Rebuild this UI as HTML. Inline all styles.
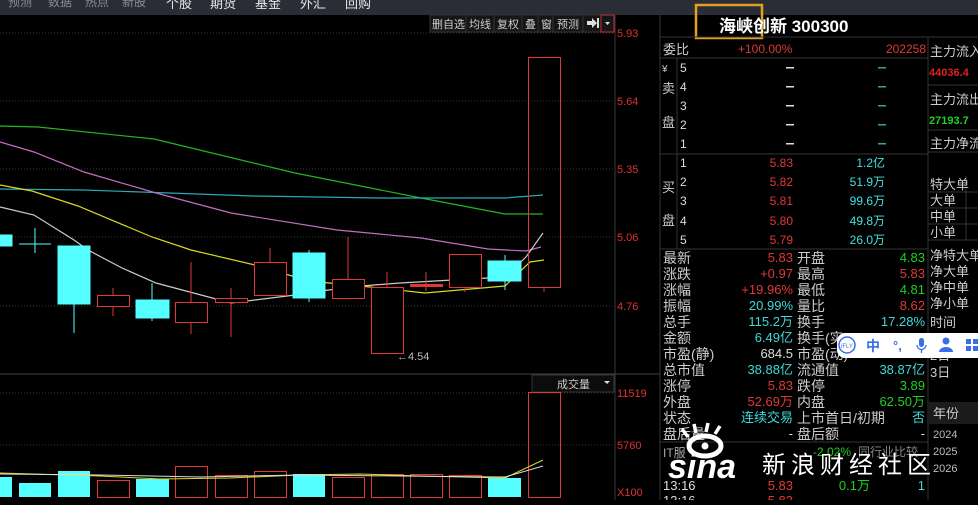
<!DOCTYPE html>
<html><head><meta charset="utf-8"><style>
html,body{margin:0;padding:0;background:#000;}
body{width:978px;height:500px;overflow:hidden;}
svg text{font-family:"Liberation Sans","WenQuanYi Zen Hei","Noto Sans CJK SC",sans-serif;}
</style></head><body>
<svg width="978" height="500" viewBox="0 0 978 500" xmlns="http://www.w3.org/2000/svg">
<rect width="978" height="500" fill="#000"/>
<!-- top bar -->
<rect x="0" y="0" width="978" height="15" fill="#2a2d36"/>
<g font-size="12" fill="#8a8d96">
<text x="8" y="6">预测</text><text x="48" y="6">数据</text><text x="85" y="6">热点</text><text x="122" y="6">新股</text>
</g>
<g font-size="13" fill="#e8e8e8">
<text x="166" y="8">个股</text><text x="210" y="8">期货</text><text x="255" y="8">基金</text><text x="300" y="8">外汇</text><text x="345" y="8">回购</text>
</g>
<!-- grid lines -->
<g stroke="#3a3a3a" stroke-dasharray="1,2">
<line x1="0" y1="33" x2="614" y2="33"/><line x1="0" y1="101" x2="614" y2="101"/><line x1="0" y1="169" x2="614" y2="169"/><line x1="0" y1="237" x2="614" y2="237"/><line x1="0" y1="306" x2="614" y2="306"/>
<line x1="0" y1="393" x2="614" y2="393"/><line x1="0" y1="445" x2="614" y2="445"/>
</g>
<line x1="615" y1="15" x2="615" y2="500" stroke="#333a4a"/>
<line x1="0" y1="374" x2="660" y2="374" stroke="#444"/>
<line x1="660" y1="15" x2="660" y2="500" stroke="#333"/>
<!-- price labels -->
<g font-size="11" fill="#e03030">
<text x="617" y="37">5.93</text><text x="617" y="105">5.64</text><text x="617" y="173">5.35</text><text x="617" y="241">5.06</text><text x="617" y="310">4.76</text>
<text x="617" y="397">11519</text><text x="617" y="449">5760</text><text x="617" y="496">X100</text>
</g>
<!-- toolbar -->
<rect x="430" y="15" width="184" height="17" fill="#161616" stroke="#333"/>
<g font-size="11" fill="#ccc">
<text x="432" y="28">删自选</text><text x="469" y="28">均线</text><text x="497" y="28">复权</text><text x="525" y="28">叠</text><text x="541" y="28">窗</text><text x="557" y="28">预测</text>
</g>
<g stroke="#333"><line x1="466" y1="15" x2="466" y2="32"/><line x1="494" y1="15" x2="494" y2="32"/><line x1="522" y1="15" x2="522" y2="32"/><line x1="538" y1="15" x2="538" y2="32"/><line x1="553" y1="15" x2="553" y2="32"/><line x1="583" y1="15" x2="583" y2="32"/><line x1="601" y1="15" x2="601" y2="32"/></g>
<path d="M587 21h5v-3l5 5-5 5v-3h-5z" fill="#ddd"/><rect x="597" y="18" width="2" height="10" fill="#ddd"/>
<rect x="601" y="15" width="13" height="17" fill="none" stroke="#c03030"/>
<path d="M605 22h5l-2.5 3z" fill="#ddd"/>
<!-- MAs -->
<g fill="none" stroke-width="1.2">
<polyline stroke="#22b822" points="0,126 38,127 154,139 295,173 421,198 505,214 543,214"/>
<polyline stroke="#2aa8b8" points="0,189 84,190 253,196 379,198 505,198 543,195"/>
<polyline stroke="#c070c0" points="0,142 34,152 84,172 156,193 231,213 337,230 421,238 488,249 526,251 541,247"/>
<polyline stroke="#d8d820" points="0,185 32,191 78,206 152,237 191,250 255,265 309,281 370,287 425,293 505,286 530,262 544,260"/>
<polyline stroke="#cccccc" points="0,207 34,215 74,240 88,250 122,268 156,283 231,303 295,295 349,287 400,283 505,277 526,257 543,233"/>
</g>
<!-- candles -->
<g stroke="#e03838" fill="none">
<line x1="113" y1="288" x2="113" y2="316"/><rect x="97.5" y="295.5" width="32" height="11" fill="#000"/>
<line x1="191" y1="262" x2="191" y2="334"/><rect x="175.5" y="302.5" width="32" height="20" fill="#000"/>
<line x1="231" y1="288" x2="231" y2="337"/><rect x="215.5" y="298.5" width="32" height="4" fill="#000"/>
<line x1="270" y1="248" x2="270" y2="262"/><rect x="254.5" y="262.5" width="32" height="33" fill="#000"/>
<line x1="348" y1="237" x2="348" y2="279"/><rect x="332.5" y="279.5" width="32" height="19" fill="#000"/>
<line x1="387" y1="272" x2="387" y2="287"/><rect x="371.5" y="287.5" width="32" height="66" fill="#000"/>
<line x1="426" y1="272" x2="426" y2="291"/><rect x="410.5" y="284.5" width="32" height="2" fill="#e03838"/>
<line x1="465" y1="287" x2="465" y2="292"/><rect x="449.5" y="254.5" width="32" height="33" fill="#000"/>
<line x1="544" y1="287" x2="544" y2="292"/><rect x="528.5" y="57.5" width="32" height="230" fill="none"/>
</g>
<g fill="#55ffff" stroke="#55ffff">
<rect x="0" y="235" width="12" height="11"/>
<line x1="35" y1="228" x2="35" y2="253"/><line x1="19" y1="244" x2="51" y2="244"/>
<line x1="74" y1="300" x2="74" y2="333"/><rect x="58" y="246" width="32" height="58"/>
<line x1="152" y1="283" x2="152" y2="321"/><rect x="136" y="300" width="33" height="18"/>
<line x1="309" y1="250" x2="309" y2="302"/><rect x="293" y="253" width="32" height="45"/>
<line x1="505" y1="255" x2="505" y2="290"/><rect x="488" y="261" width="33" height="20"/>
</g>
<text x="397" y="360" font-size="11" fill="#bbb">←4.54</text>
<!-- volume -->
<rect x="532" y="375" width="82" height="17" fill="#0c0c0c" stroke="#333"/>
<text x="557" y="388" font-size="11" fill="#ccc">成交量</text>
<path d="M604 381h6l-3 3z" fill="#ddd"/>
<g fill="#55ffff">
<rect x="0" y="477" width="12" height="20"/><rect x="19" y="483" width="32" height="14"/><rect x="58" y="471" width="32" height="26"/><rect x="136" y="479" width="33" height="18"/><rect x="293" y="474" width="32" height="23"/><rect x="488" y="478" width="33" height="19"/>
</g>
<g fill="none" stroke="#e03838">
<rect x="97.5" y="480.5" width="32" height="17"/><rect x="175.5" y="466.5" width="32" height="31"/><rect x="215.5" y="475.5" width="32" height="22"/><rect x="254.5" y="471.5" width="32" height="26"/><rect x="332.5" y="477.5" width="32" height="20"/><rect x="371.5" y="474.5" width="32" height="23"/><rect x="410.5" y="474.5" width="32" height="23"/><rect x="449.5" y="475.5" width="32" height="22"/><rect x="528.5" y="392.5" width="32" height="105"/>
</g>
<polyline fill="none" stroke="#d8d820" points="0,473 100,476 160,479 230,478 300,475 360,474 420,476 505,478 543,460"/>
<polyline fill="none" stroke="#ddd" points="0,474 100,475 200,477 300,475 400,476 505,477 543,466"/>
<!-- right panel -->
<rect x="696" y="5" width="66" height="33" fill="none" stroke="#e0a020" stroke-width="2.5"/>
<text x="719" y="32" font-size="17" font-weight="bold" fill="#fff" font-family="Liberation Serif,Noto Serif CJK SC,serif">海峡创新 300300</text>
<g stroke="#333">
<line x1="660" y1="37" x2="978" y2="37"/><line x1="660" y1="58" x2="928" y2="58"/><line x1="660" y1="154" x2="928" y2="154"/><line x1="660" y1="249" x2="928" y2="249"/>
<line x1="677" y1="58" x2="677" y2="249"/><line x1="928" y1="37" x2="928" y2="500"/><line x1="660" y1="442" x2="928" y2="442"/>
<line x1="928" y1="85" x2="978" y2="85"/><line x1="928" y1="130" x2="978" y2="130"/><line x1="928" y1="152" x2="978" y2="152"/>
<line x1="928" y1="192" x2="978" y2="192"/><line x1="928" y1="208" x2="978" y2="208"/><line x1="928" y1="224" x2="978" y2="224"/><line x1="928" y1="240" x2="978" y2="240"/>
<line x1="966" y1="176" x2="966" y2="240"/>
</g>
<g font-size="13" fill="#ccc">
<text x="663" y="54">委比</text>
<text x="662" y="72" font-size="10">¥</text><text x="662" y="93">卖</text><text x="662" y="127">盘</text>
<text x="662" y="192">买</text><text x="662" y="225">盘</text>
</g>
<text x="738" y="53" font-size="12" fill="#e03838">+100.00%</text>
<text x="926" y="53" font-size="12" fill="#e03838" text-anchor="end">202258</text>
<g font-size="12" fill="#ddd">
<text x="680" y="72">5</text><text x="680" y="91">4</text><text x="680" y="110">3</text><text x="680" y="129">2</text><text x="680" y="148">1</text>
<text x="680" y="167">1</text><text x="680" y="186">2</text><text x="680" y="205">3</text><text x="680" y="225">4</text><text x="680" y="244">5</text>
</g>
<g fill="#ddd"><rect x="786" y="67" width="8" height="1.5"/><rect x="786" y="86" width="8" height="1.5"/><rect x="786" y="105" width="8" height="1.5"/><rect x="786" y="124" width="8" height="1.5"/><rect x="786" y="143" width="8" height="1.5"/></g>
<g fill="#2aa8a8"><rect x="878" y="67" width="8" height="1.5"/><rect x="878" y="86" width="8" height="1.5"/><rect x="878" y="105" width="8" height="1.5"/><rect x="878" y="124" width="8" height="1.5"/><rect x="878" y="143" width="8" height="1.5"/></g>
<g font-size="12" fill="#e03838" text-anchor="end">
<text x="793" y="167">5.83</text><text x="793" y="186">5.82</text><text x="793" y="205">5.81</text><text x="793" y="225">5.80</text><text x="793" y="244">5.79</text>
</g>
<g font-size="12" fill="#40e0e0" text-anchor="end">
<text x="885" y="167">1.2亿</text><text x="885" y="186">51.9万</text><text x="885" y="205">99.6万</text><text x="885" y="225">49.8万</text><text x="885" y="244">26.0万</text>
</g>
<!-- far right column -->
<g font-size="13" fill="#ccc">
<text x="930" y="56">主力流入</text><text x="930" y="104">主力流出</text><text x="930" y="148">主力净流</text>
<text x="930" y="189">特大单</text><text x="930" y="205">大单</text><text x="930" y="221">中单</text><text x="930" y="237">小单</text>
<text x="930" y="260">净特大单</text><text x="930" y="276">净大单</text><text x="930" y="292">净中单</text><text x="930" y="308">净小单</text>
<text x="930" y="327">时间</text><text x="930" y="360">2日</text><text x="930" y="377">3日</text>
</g>
<text x="929" y="76" font-size="11" font-weight="bold" fill="#e02020">44036.4</text>
<text x="929" y="124" font-size="11" font-weight="bold" fill="#20d020">27193.7</text>
<rect x="929" y="402" width="49" height="22" fill="#1c1c1c"/>
<text x="933" y="418" font-size="13" fill="#ccc">年份</text>
<g font-size="11" fill="#bbb"><text x="933" y="438">2024</text><text x="933" y="455">2025</text><text x="933" y="472">2026</text></g>
<!-- quote table -->
<g font-size="14" fill="#ccc">
<text x="663" y="263">最新</text><text x="663" y="279">涨跌</text><text x="663" y="295">涨幅</text><text x="663" y="311">振幅</text><text x="663" y="327">总手</text><text x="663" y="343">金额</text><text x="663" y="359">市盈(静)</text><text x="663" y="375">总市值</text><text x="663" y="391">涨停</text><text x="663" y="407">外盘</text><text x="663" y="423">状态</text><text x="663" y="439">盘后量</text>
<text x="797" y="263">开盘</text><text x="797" y="279">最高</text><text x="797" y="295">最低</text><text x="797" y="311">量比</text><text x="797" y="327">换手</text><text x="797" y="343">换手(实)</text><text x="797" y="359">市盈(动)</text><text x="797" y="375">流通值</text><text x="797" y="391">跌停</text><text x="797" y="407">内盘</text><text x="797" y="423">上市首日/初期</text><text x="797" y="439">盘后额</text>
</g>
<g font-size="13" text-anchor="end">
<text x="793" y="262" fill="#e03838">5.83</text><text x="793" y="278" fill="#e03838">+0.97</text><text x="793" y="294" fill="#e03838">+19.96%</text><text x="793" y="310" fill="#40d8d8">20.99%</text><text x="793" y="326" fill="#40d8d8">115.2万</text><text x="793" y="342" fill="#40d8d8">6.49亿</text><text x="793" y="358" fill="#ddd">684.5</text><text x="793" y="374" fill="#40d8d8">38.88亿</text><text x="793" y="390" fill="#e03838">5.83</text><text x="793" y="406" fill="#e03838">52.69万</text><text x="793" y="422" fill="#40d8d8">连续交易</text><text x="793" y="438" fill="#ddd">-</text>
<text x="925" y="262" fill="#20d020">4.83</text><text x="925" y="278" fill="#e03838">5.83</text><text x="925" y="294" fill="#20d020">4.81</text><text x="925" y="310" fill="#e03838">8.62</text><text x="925" y="326" fill="#40d8d8">17.28%</text><text x="925" y="374" fill="#40d8d8">38.87亿</text><text x="925" y="390" fill="#20d020">3.89</text><text x="925" y="406" fill="#20d020">62.50万</text><text x="925" y="422" fill="#40d8d8">否</text><text x="925" y="438" fill="#ddd">-</text>
</g>
<text x="663" y="457" font-size="12" fill="#aaa">IT服</text>
<text x="851" y="456" font-size="12" fill="#20d020" text-anchor="end">-2.02%</text>
<text x="858" y="456" font-size="12" fill="#888">同行业比较</text>
<g font-size="13">
<text x="663" y="490" fill="#ddd">13:16</text><text x="793" y="490" fill="#e03838" text-anchor="end">5.83</text><text x="870" y="490" fill="#20d020" text-anchor="end">0.1万</text><text x="925" y="490" fill="#40d8d8" text-anchor="end">1</text>
<text x="663" y="505" fill="#ddd">13:16</text><text x="793" y="505" fill="#e03838" text-anchor="end">5.83</text>
</g>
<!-- iFly bar -->
<rect x="837" y="333" width="150" height="25" rx="8" fill="#fff"/>
<circle cx="847" cy="345" r="8" fill="none" stroke="#3a6ee8" stroke-width="1.5"/>
<text x="841" y="348" font-size="6" fill="#3a6ee8">iFLY</text>
<text x="866" y="351" font-size="14" fill="#3a6ee8" font-weight="bold">中</text>
<text x="893" y="350" font-size="13" fill="#3a6ee8" font-weight="bold">°,</text>
<rect x="919" y="338" width="5" height="9" rx="2.5" fill="#3a6ee8"/><path d="M917 345a4.5 4.5 0 0 0 9 0M921.5 350v3" stroke="#3a6ee8" fill="none" stroke-width="1.3"/>
<circle cx="946" cy="341" r="3.5" fill="#3a6ee8"/><path d="M939 352a7 5 0 0 1 14 0z" fill="#3a6ee8"/>
<g fill="#3a6ee8"><rect x="966" y="339" width="5" height="5"/><rect x="973" y="339" width="5" height="5"/><rect x="966" y="346" width="5" height="5"/><rect x="973" y="346" width="5" height="5"/></g>
<!-- sina watermark -->
<g fill="#fff">
<ellipse cx="705" cy="446" rx="16" ry="10" fill="none" stroke="#fff" stroke-width="5"/>
<circle cx="705" cy="446" r="3.5"/>
<path d="M688 437l-6-8M696 433l-2-9M706 432l2-9M715 434l5-8" stroke="#fff" stroke-width="3.5" fill="none"/>
<text x="668" y="478" font-size="34" font-weight="bold" font-style="italic" font-family="Liberation Sans,sans-serif">sina</text>
<text x="762" y="473" font-size="24" letter-spacing="5" font-family="WenQuanYi Zen Hei,Noto Sans CJK SC,sans-serif">新浪财经社区</text>
</g>
</svg>
</body></html>
